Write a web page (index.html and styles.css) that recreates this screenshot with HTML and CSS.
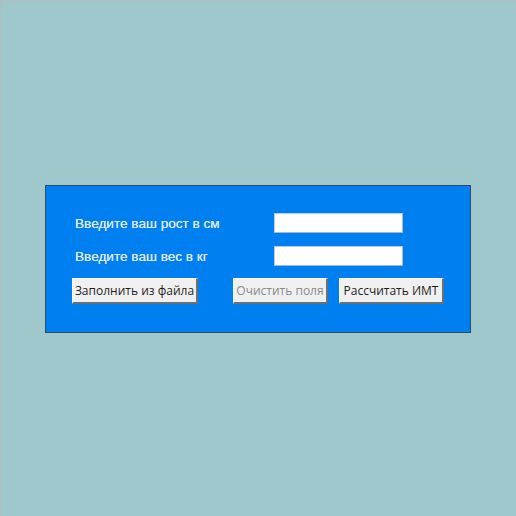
FILE: index.html
```html
<!DOCTYPE html>
<html>
<head>
<meta charset="utf-8">
<link rel="stylesheet" href="styles.css">
</head>
<body>
<div class="screen">
  <div class="panel">
    <div class="row">
      <label class="label">Введите ваш рост в см</label>
      <input class="field" type="text">
    </div>
    <div class="row">
      <label class="label">Введите ваш вес в кг</label>
      <input class="field" type="text">
    </div>
    <div class="buttons">
      <button class="btn btn-file">Заполнить из файла</button>
      <button class="btn btn-clear" disabled>Очистить поля</button>
      <button class="btn btn-calc">Рассчитать ИМТ</button>
    </div>
  </div>
</div>
</body>
</html>
```
FILE: styles.css
```css
html, body {
  margin: 0;
  padding: 0;
}
body {
  background: #9ec8cc;
  width: 516px;
  height: 516px;
  overflow: hidden;
}
.screen {
  box-sizing: border-box;
  width: 516px;
  height: 516px;
  border-top: 1px solid #b4bcbe;
  border-left: 1px solid #b4bcbe;
  padding-top: 184px;
  padding-left: 44px;
}
.panel {
  box-sizing: border-box;
  width: 426px;
  height: 148px;
  background: #0080f0;
  border: 1px solid #2b4d66;
  padding: 27px 0 0 26px;
  display: flex;
  flex-direction: column;
}
.row {
  display: flex;
  align-items: center;
  height: 20px;
  margin-bottom: 13px;
}
.label {
  width: 202px;
  padding-left: 3px;
  box-sizing: border-box;
  font-family: "Liberation Sans", Arial, sans-serif;
  font-size: 13.6px;
  color: #dce8f6;
  white-space: nowrap;
  text-shadow: 0 0 0.4px #e8f0fa;
}
.field {
  box-sizing: border-box;
  width: 129px;
  height: 20px;
  margin: 0;
  padding: 0;
  background: #ffffff;
  border: 1px solid #b8cce4;
  border-right-color: #a8b8c8;
  border-bottom-color: #a8b8c8;
  outline: none;
}
.buttons {
  display: flex;
  margin-top: -1px;
}
.btn {
  box-sizing: border-box;
  height: 26px;
  margin: 0;
  padding: 0;
  background: #f0f0f0;
  border: 1px solid #ffffff;
  border-right: 2px solid #6b7070;
  border-bottom: 2px solid #6b7070;
  font-family: "Open Sans", "Noto Sans", sans-serif;
  font-size: 12px;
  color: #1e1e1e;
  white-space: nowrap;
}
.btn-file {
  width: 126px;
}
.btn-clear {
  width: 95px;
  margin-left: 35px;
  color: #8a8a8a;
}
.btn-calc {
  width: 105px;
  margin-left: 11px;
}
```
